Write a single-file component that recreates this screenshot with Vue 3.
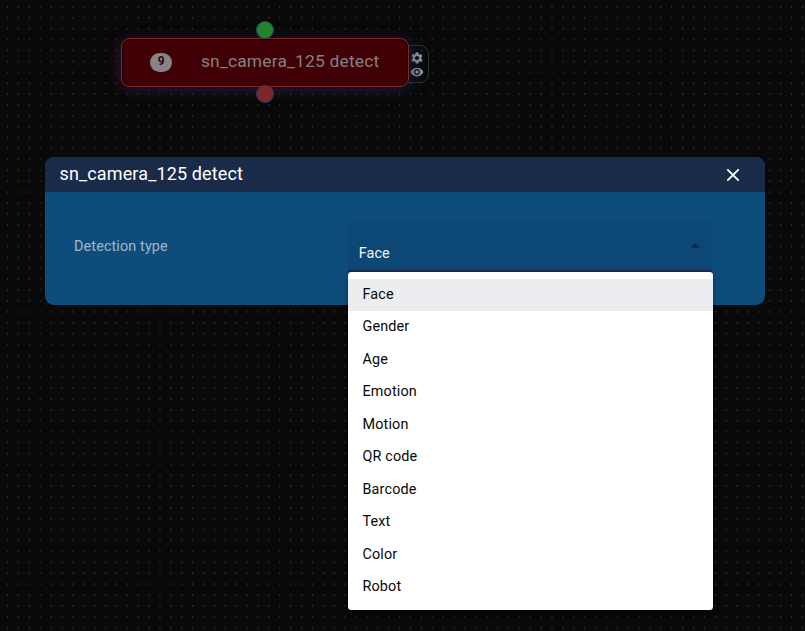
<script setup>
import { ref } from 'vue'

const options = ['Face', 'Gender', 'Age', 'Emotion', 'Motion', 'QR code', 'Barcode', 'Text', 'Color', 'Robot']
const selected = ref('Face')
</script>

<template>
  <main class="canvas">
    <svg class="grid" width="805" height="631" aria-hidden="true">
      <defs>
        <pattern id="dots" width="10.89" height="10.89" patternUnits="userSpaceOnUse">
          <rect x="7" y="6.4" width="1.1" height="1.1" fill="#505050" />
        </pattern>
      </defs>
      <rect width="805" height="631" fill="url(#dots)" />
    </svg>

    <div class="tools">
      <svg class="tool" viewBox="0 0 24 24"><path d="M19.14 12.94c.04-.3.06-.61.06-.94s-.02-.64-.07-.94l2.03-1.58a.49.49 0 0 0 .12-.61l-1.92-3.32a.49.49 0 0 0-.59-.22l-2.39.96a7 7 0 0 0-1.62-.94l-.36-2.54A.48.48 0 0 0 13.92 2h-3.84a.48.48 0 0 0-.48.41l-.36 2.54a7 7 0 0 0-1.62.94l-2.39-.96a.49.49 0 0 0-.59.22L2.72 8.47a.49.49 0 0 0 .12.61l2.03 1.58a7 7 0 0 0 0 2.28l-2.03 1.58a.49.49 0 0 0-.12.61l1.92 3.32c.12.22.37.29.59.22l2.39-.96c.5.38 1.03.7 1.62.94l.36 2.54c.05.24.24.41.48.41h3.84c.24 0 .44-.17.48-.41l.36-2.54a7 7 0 0 0 1.62-.94l2.39.96c.22.08.47 0 .59-.22l1.92-3.32a.49.49 0 0 0-.12-.61zM12 15.6a3.6 3.6 0 1 1 0-7.2 3.6 3.6 0 0 1 0 7.2z" /></svg>
      <svg class="tool" viewBox="0 0 24 24"><path d="M12 4.5C7 4.5 2.73 7.61 1 12c1.73 4.39 6 7.5 11 7.5s9.27-3.11 11-7.5c-1.73-4.39-6-7.5-11-7.5zM12 17a5 5 0 1 1 0-10 5 5 0 0 1 0 10zm0-8a3 3 0 1 0 0 6 3 3 0 0 0 0-6z" /></svg>
    </div>
    <div class="node">
      <span class="badge">9</span>
      <span class="node-title">sn_camera_125 detect</span>
    </div>
    <i class="port port-in"></i>
    <i class="port port-out"></i>

    <section class="dialog">
      <header class="dialog-head">
        <h1>sn_camera_125 detect</h1>
        <svg class="close" viewBox="0 0 14 14"><path d="M1.3 1.3 12.7 12.7M12.7 1.3 1.3 12.7" /></svg>
      </header>
      <div class="dialog-body">
        <label class="label">Detection type</label>
        <div class="select">
          <span class="value">{{ selected }}</span>
          <svg class="arrow" viewBox="0 0 8 4"><path d="M0 4 4 0l4 4z" /></svg>
          <ul class="menu">
            <li v-for="option in options" :key="option" :class="{ active: option === selected }" @click="selected = option">{{ option }}</li>
          </ul>
        </div>
      </div>
    </section>
  </main>
</template>

<style>
body { background: #090909; }
</style>

<style scoped>
.canvas {
  position: relative;
  box-sizing: border-box;
  width: 805px;
  height: 631px;
  padding: 157px 40px 0 45px;
  overflow: hidden;
  background: #090909;
  font-family: Roboto, sans-serif;
}
.grid { position: absolute; left: 0; top: 0; }
.node {
  position: absolute;
  left: 121.4px;
  top: 38px;
  box-sizing: border-box;
  width: 287.6px;
  height: 48.5px;
  padding-left: 28px;
  display: flex;
  align-items: center;
  border: 1px solid #84291f;
  border-radius: 9px;
  background: #410006;
  box-shadow: inset 0 0 0 1px #180003, -5px 2px 14px rgba(90, 20, 55, .38), 5px 2px 16px rgba(20, 45, 100, .45);
}
.badge {
  width: 21.5px;
  height: 19px;
  border-radius: 10px;
  background: #858585;
  color: #410006;
  font-size: 12px;
  font-weight: 700;
  line-height: 17px;
  text-align: center;
}
.node-title {
  margin: -3px 0 0 29px;
  color: #858083;
  font-size: 17.4px;
  line-height: 24px;
  letter-spacing: .19px;
  white-space: nowrap;
}
.tools {
  position: absolute;
  left: 400px;
  top: 45px;
  box-sizing: border-box;
  width: 29px;
  height: 38px;
  padding: 4.5px 4px 0 9px;
  display: flex;
  flex-direction: column;
  align-items: center;
  border: 1px solid #303236;
  border-radius: 9px;
}
.tool { display: block; width: 14px; height: 14px; fill: #999; flex: none; }
.port {
  position: absolute;
  left: 255.5px;
  box-sizing: border-box;
  width: 18px;
  height: 18px;
  border: 1px solid #20406f;
  border-radius: 50%;
}
.port-in { top: 21px; background: #25822c; }
.port-out { top: 85.4px; background: #812529; }
.dialog {
  position: relative;
  height: 147.5px;
  border-radius: 9px;
  background: #0e4d7b;
}
.dialog-head {
  display: flex;
  align-items: center;
  justify-content: space-between;
  box-sizing: border-box;
  height: 35px;
  padding: 0 25.5px 0 14.5px;
  border-radius: 9px 9px 0 0;
  background: #1a2b4a;
}
h1 {
  margin: 0;
  padding-bottom: 2px;
  color: #fff;
  font-size: 18px;
  font-weight: 400;
  line-height: 24px;
  letter-spacing: .14px;
}
.close { width: 14px; height: 14px; fill: none; stroke: #fff; stroke-width: 1.8; }
.dialog-body { display: flex; padding: 29px 52.5px 0 29px; }
.label {
  width: 274px;
  color: #9fb8ca;
  font-size: 14.4px;
  line-height: 51px;
  letter-spacing: .12px;
}
.select {
  position: relative;
  box-sizing: border-box;
  width: 364px;
  height: 51px;
  padding: 0 12.5px 0 10.7px;
  display: flex;
  justify-content: space-between;
  align-items: center;
  border-bottom: 2px solid #172b50;
  border-radius: 4px 4px 0 0;
  background: #0d4776;
}
.value { padding-top: 16.5px; color: #f2f6f9; font-size: 14.4px; line-height: 20px; letter-spacing: .12px; }
.arrow { width: 8.5px; height: 4.5px; fill: #07253f; }
.menu {
  position: absolute;
  left: 0;
  top: 51px;
  box-sizing: border-box;
  width: 365px;
  height: 338px;
  margin: 0;
  padding: 7.04px 0;
  border-radius: 3.5px;
  background: #fff;
  box-shadow: 0 2px 4px -1px rgba(0, 0, 0, .2), 0 4px 5px rgba(0, 0, 0, .14), 0 1px 10px rgba(0, 0, 0, .12);
  list-style: none;
}
.menu li {
  height: 32.44px;
  padding-left: 14.5px;
  color: #0a0a0a;
  font-size: 14.4px;
  line-height: 32.44px;
  letter-spacing: .14px;
}
.menu .active { background: #ecedf1; }
</style>
